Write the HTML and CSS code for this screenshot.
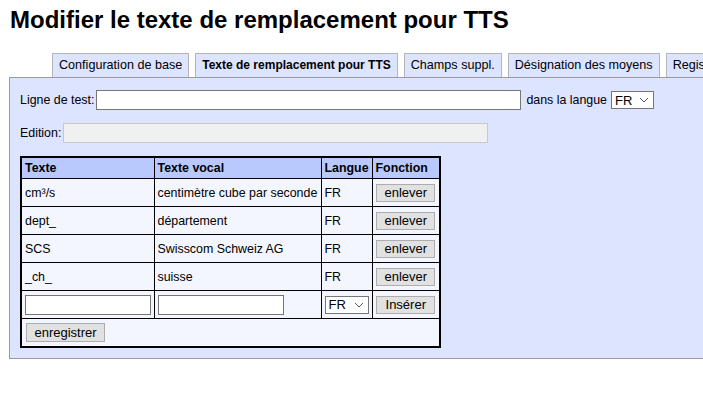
FILE: index.html
```html
<!DOCTYPE html>
<html lang="fr">
<head>
<meta charset="utf-8">
<title>Modifier le texte de remplacement pour TTS</title>
<link rel="stylesheet" href="styles.css">
</head>
<body>
<h1 class="title">Modifier le texte de remplacement pour TTS</h1>
<div class="tabs">
  <div class="tab">Configuration de base</div>
  <div class="tab active">Texte de remplacement pour TTS</div>
  <div class="tab">Champs suppl.</div>
  <div class="tab">Désignation des moyens</div>
  <div class="tab">Registre</div>
</div>
<div class="panel">
  <div class="row">
    <label class="lbl">Ligne de test:</label>
    <input class="txt wide" type="text">
    <span class="lbl">dans la langue</span>
    <span class="sel"><span>FR</span><svg width="10" height="6" viewBox="0 0 10 6"><path d="M1 1l4 4 4-4" fill="none" stroke="#555" stroke-width="1"/></svg></span>
  </div>
  <div class="row row2">
    <label class="lbl">Edition:</label>
    <div class="txt wide disabled"></div>
  </div>
  <table class="grid">
    <colgroup>
      <col class="c1"><col class="c2"><col class="c3"><col class="c4">
    </colgroup>
    <thead>
      <tr><th>Texte</th><th>Texte vocal</th><th>Langue</th><th>Fonction</th></tr>
    </thead>
    <tbody>
      <tr><td>cm³/s</td><td>centimètre cube par seconde</td><td>FR</td><td class="fn"><button class="btn">enlever</button></td></tr>
      <tr><td>dept_</td><td>département</td><td>FR</td><td class="fn"><button class="btn">enlever</button></td></tr>
      <tr><td>SCS</td><td>Swisscom Schweiz AG</td><td>FR</td><td class="fn"><button class="btn">enlever</button></td></tr>
      <tr><td>_ch_</td><td>suisse</td><td>FR</td><td class="fn"><button class="btn">enlever</button></td></tr>
      <tr>
        <td><input class="txt cellin" type="text"></td>
        <td><input class="txt cellin" type="text"></td>
        <td><span class="sel small"><span>FR</span><svg width="10" height="6" viewBox="0 0 10 6"><path d="M1 1l4 4 4-4" fill="none" stroke="#555" stroke-width="1"/></svg></span></td>
        <td class="fn"><button class="btn">Insérer</button></td>
      </tr>
      <tr><td colspan="4" class="save"><button class="btn btn-save">enregistrer</button></td></tr>
    </tbody>
  </table>
</div>
</body>
</html>
```
FILE: styles.css
```css
html, body {
  margin: 0;
  padding: 0;
  background: #ffffff;
  overflow: hidden;
}
body {
  font-family: "Liberation Sans", Arial, sans-serif;
  font-size: 12.4px;
  color: #000;
  width: 703px;
}
.title {
  font-size: 24px;
  font-weight: bold;
  margin: 6px 0 0 10px;
  line-height: 27px;
  white-space: nowrap;
}
.tabs {
  display: flex;
  gap: 6px;
  margin: 20px 0 0 52px;
  white-space: nowrap;
  overflow: hidden;
}
.tab {
  flex: none;
  background: #dde4ff;
  border: 1px solid #b4b4b4;
  border-bottom: none;
  padding: 0 6px;
  line-height: 23px;
  height: 23px;
  font-size: 12.6px;
}
.tab.active {
  font-weight: bold;
  font-size: 12px;
}
.panel {
  margin-left: 9px;
  width: 720px;
  background: #dde4ff;
  border: 1px solid #9a9a9a;
  padding: 12px 0 10px 10px;
  box-sizing: border-box;
}
.row {
  display: flex;
  align-items: center;
  height: 20px;
}
.row2 {
  margin-top: 13px;
}
.lbl {
  white-space: nowrap;
}
.row .lbl:first-child {
  margin-right: 2px;
}
.txt {
  box-sizing: border-box;
  height: 20px;
  border: 1px solid #767676;
  background: #fff;
  margin: 0;
  padding: 0 2px;
  font: inherit;
}
.wide {
  width: 425px;
}
.row .wide + .lbl {
  margin-left: 5px;
  margin-right: 4px;
}
.disabled {
  background: #f0f0f0;
  border-color: #c8c8c8;
}
.sel {
  box-sizing: border-box;
  display: inline-flex;
  align-items: center;
  justify-content: space-between;
  width: 43px;
  height: 18px;
  border: 1px solid #767676;
  background: #fff;
  padding: 0 4px 0 3px;
  font-size: 13px;
}
.sel.small {
  width: 44px;
}
.grid {
  margin-top: 13px;
  border-collapse: collapse;
  border: 2px solid #000;
  table-layout: fixed;
  width: 419px;
}
.c1 { width: 133px; }
.c2 { width: 167px; }
.c3 { width: 51px; }
.c4 { width: 68px; }
.grid th, .grid td {
  border: 1px solid #000;
  padding: 0 3px;
  text-align: left;
  white-space: nowrap;
  overflow: hidden;
}
.grid th {
  background: #b9c9fe;
  height: 20px;
  font-weight: bold;
}
.grid td {
  background: #f4f6ff;
  height: 27px;
}
.grid td.fn {
  padding: 0;
  text-align: center;
}
.cellin {
  width: 126px;
  display: block;
}
.btn {
  box-sizing: border-box;
  width: 59px;
  height: 18px;
  background: #e1e1e1;
  border: 1px solid #adadad;
  font-family: "Liberation Sans", Arial, sans-serif;
  font-size: 13px;
  padding: 0;
  margin: 0;
  color: #000;
  line-height: 16px;
}
.grid td.save {
  padding: 0 4px;
}
.btn-save {
  width: 79px;
  height: 19px;
}
```
